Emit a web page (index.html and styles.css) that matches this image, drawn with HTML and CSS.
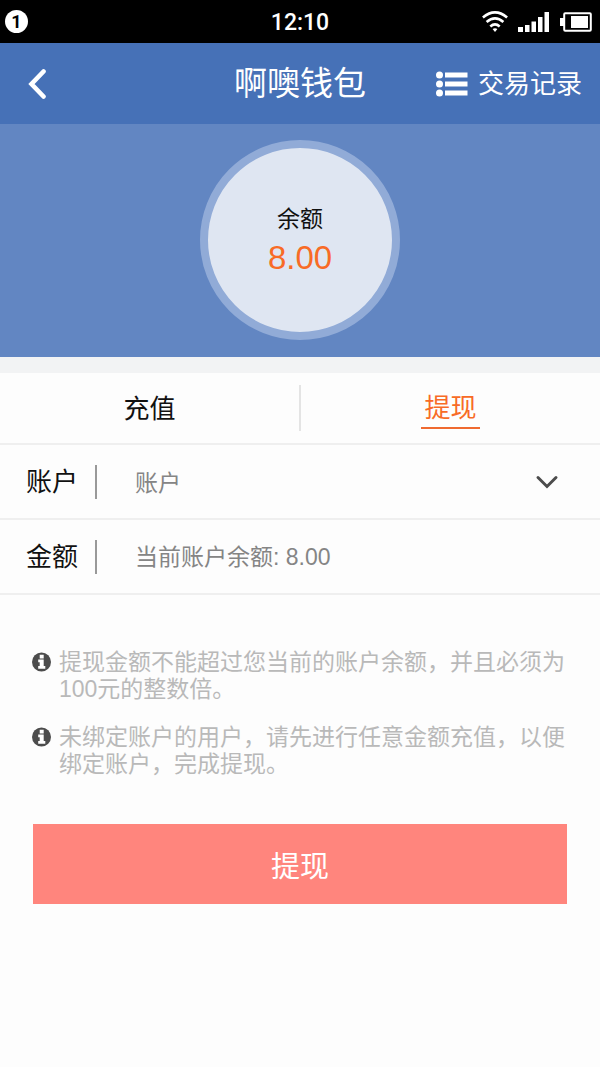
FILE: index.html
```html
<!DOCTYPE html>
<html lang="zh-CN">
<head>
<meta charset="utf-8">
<meta name="viewport" content="width=device-width, initial-scale=1">
<title>啊噢钱包</title>
<link rel="stylesheet" href="styles.css">
</head>
<body>
<div class="status">
  <span class="status-badge">1</span>
  <span class="status-time">12:10</span>
  <span class="status-icons">
    <svg width="26" height="22" viewBox="0 0 26 22" aria-hidden="true">
      <g fill="none" stroke="#fff" stroke-width="2.6">
        <path d="M.9 6.5Q13-3.700 25.100 6.500"/>
        <path d="M4.600 11Q13 3.800 21.400 11"/>
        <path d="M8.300 15.400Q13 11.300 17.700 15.400"/>
      </g>
      <path d="M10.600 18.100Q13 16.300 15.400 18.100L13 21Z" fill="#fff"/>
    </svg>
    <svg width="32" height="20" viewBox="0 0 32 20" fill="#fff" aria-hidden="true">
      <path d="M0 15h5v5H0zM7 13h4.500v7H7zM13.500 9.500H18V20h-4.500zM20 5h4.500v15H20zM26.500 0H31v20h-4.500z"/>
    </svg>
    <svg width="32" height="20" viewBox="0 0 32 20" aria-hidden="true">
      <rect x="4.200" y="1.200" width="26.600" height="17.600" rx="1" fill="none" stroke="#fff" stroke-width="2"/>
      <path d="M0 6h4v8H0zM11 4h17v12H11z" fill="#fff"/>
    </svg>
  </span>
</div>
<header class="header">
  <button class="back" type="button" aria-label="返回">
    <svg width="18" height="30" viewBox="0 0 18 30" aria-hidden="true"><path d="M15.500 2.500L3.500 15l12 12.500" fill="none" stroke="#fff" stroke-width="4.600" stroke-linecap="round" stroke-linejoin="miter"/></svg>
  </button>
  <h1 class="title">啊噢钱包</h1>
  <a class="history" href="#">
    <svg width="32" height="26" viewBox="0 0 32 26" fill="#fff" aria-hidden="true">
      <circle cx="3.500" cy="4" r="3.500"/><circle cx="3.500" cy="13" r="3.500"/><circle cx="3.500" cy="22" r="3.500"/>
      <path d="M9 1.500h22.500v5H9zM9 10.500h22.500v5H9zM9 19.500h22.500v5H9z"/>
    </svg>
    <span>交易记录</span>
  </a>
</header>
<main>
  <section class="hero">
    <div class="balance">
      <span class="balance-label">余额</span>
      <span class="balance-value">8.00</span>
    </div>
  </section>
  <nav class="tabs">
    <button class="tab" type="button"><span class="tab-text">充值</span></button>
    <button class="tab tab-active" type="button"><span class="tab-text">提现</span></button>
  </nav>
  <form class="form">
    <div class="row">
      <label class="row-label" for="account">账户</label>
      <select class="field" id="account"><option>账户</option></select>
      <svg class="chevron" width="24" height="16" viewBox="0 0 24 16" aria-hidden="true"><path d="M3 3.500l9 9 9-9" fill="none" stroke="#4c4c4c" stroke-width="3" stroke-linecap="round"/></svg>
    </div>
    <div class="row">
      <label class="row-label" for="amount">金额</label>
      <input class="field" id="amount" type="text" placeholder="当前账户余额: 8.00">
    </div>
    <ul class="notes">
      <li class="note">
        <svg class="info" width="20" height="20" viewBox="0 0 20 20" aria-hidden="true"><circle cx="9.500" cy="10" r="9.500" fill="#4c4c4c"/><path d="M7.700 2.800h4v3.600h-4zM6.200 7.500h5.500v6.400h1.600v2.800H6.200v-2.800h1.500v-3.600H6.200z" fill="#fff"/></svg>
        <span>提现金额不能超过您当前的账户余额，并且必须为100元的整数倍。</span>
      </li>
      <li class="note">
        <svg class="info" width="20" height="20" viewBox="0 0 20 20" aria-hidden="true"><circle cx="9.500" cy="10" r="9.500" fill="#4c4c4c"/><path d="M7.700 2.800h4v3.600h-4zM6.200 7.500h5.500v6.400h1.600v2.800H6.200v-2.800h1.500v-3.600H6.200z" fill="#fff"/></svg>
        <span>未绑定账户的用户，请先进行任意金额充值，以便绑定账户，完成提现。</span>
      </li>
    </ul>
    <button class="submit" type="button">提现</button>
  </form>
</main>
</body>
</html>
```
FILE: styles.css
```css
* { box-sizing: border-box; }

body {
  margin: 0;
  background: #fdfdfd;
  color: #111;
  font-family: "Liberation Sans", "Noto Sans CJK SC", sans-serif;
}

button, select, input { font-family: inherit; }

button {
  padding: 0;
  border: 0;
  background: none;
  color: inherit;
}

svg { display: block; flex: none; }

.status {
  display: grid;
  grid-template-columns: 1fr auto 1fr;
  align-items: center;
  height: 43px;
  padding: 0 5px;
  background: #000;
  color: #fff;
}

.status-badge {
  width: 23px;
  height: 23px;
  border-radius: 50%;
  background: #fff;
  color: #000;
  font: 700 18px/23px Roboto, sans-serif;
  text-align: center;
}

.status-time { padding-top: 2px; font: 500 23px/28px Roboto, sans-serif; }

.status-icons {
  display: flex;
  justify-content: flex-end;
  align-items: center;
  gap: 10px;
  padding-right: 3px;
}

.header {
  display: grid;
  grid-template-columns: 1fr auto 1fr;
  align-items: center;
  height: 81px;
  padding: 0 18px;
  background: #4671b7;
  color: #fff;
}

.back {
  justify-self: start;
  padding-left: 10px;
}

.title {
  margin: 0;
  font-size: 33px;
  font-weight: 400;
  line-height: 48px;
}

.history {
  display: flex;
  justify-self: end;
  align-items: center;
  gap: 10px;
  color: #fff;
  font-size: 26px;
  line-height: 38px;
  text-decoration: none;
  white-space: nowrap;
}

.hero {
  display: flex;
  justify-content: center;
  padding: 16px 0 17px;
  border-bottom: 16px solid #f2f3f4;
  background: #6286c2;
}

.balance {
  display: flex;
  flex-direction: column;
  align-items: center;
  width: 200px;
  height: 200px;
  padding-top: 54px;
  border: 8px solid #91abd7;
  border-radius: 50%;
  background: #dfe6f2;
}

.balance-label { font-size: 23px; line-height: 34px; }

.balance-value {
  color: #f86b26;
  font-size: 33px;
  line-height: 44px;
}

.tabs {
  display: flex;
  height: 72px;
  padding: 12px 0;
  border-bottom: 2px solid #efefef;
}

.tab {
  display: flex;
  flex: 1;
  justify-content: center;
  align-items: center;
  font-size: 26px;
}

.tab + .tab { border-left: 2px solid #e4e4e4; }

.tab-text { padding: 2px 3px 0; line-height: 38px; }

.tab-active .tab-text {
  border-bottom: 2px solid #ef6a30;
  color: #f86b26;
}

.row {
  display: flex;
  align-items: center;
  height: 75px;
  padding: 0 41px 0 26px;
  border-bottom: 2px solid #efefef;
}

.row-label {
  width: 71px;
  border-right: 2px solid #999;
  font-size: 26px;
  line-height: 34px;
}

.field {
  flex: 1;
  min-width: 0;
  height: 48px;
  margin: 0;
  padding: 2px 0 0 38px;
  border: 0;
  outline: 0;
  appearance: none;
  background: none;
  color: #858585;
  font-size: 23px;
}

.field::placeholder { color: #858585; opacity: 1; }

.notes {
  display: flex;
  flex-direction: column;
  gap: 21px;
  margin: 0;
  padding: 54px 27px 46px 32px;
  list-style: none;
}

.note {
  display: flex;
  gap: 7px;
  color: #b9b9b9;
  font-size: 23px;
  line-height: 27px;
}

.info { margin-top: 3px; }

.submit {
  display: block;
  width: calc(100% - 66px);
  height: 80px;
  margin: 0 33px 32px;
  background: #ff857d;
  color: #fff;
  font-size: 29px;
}
```
